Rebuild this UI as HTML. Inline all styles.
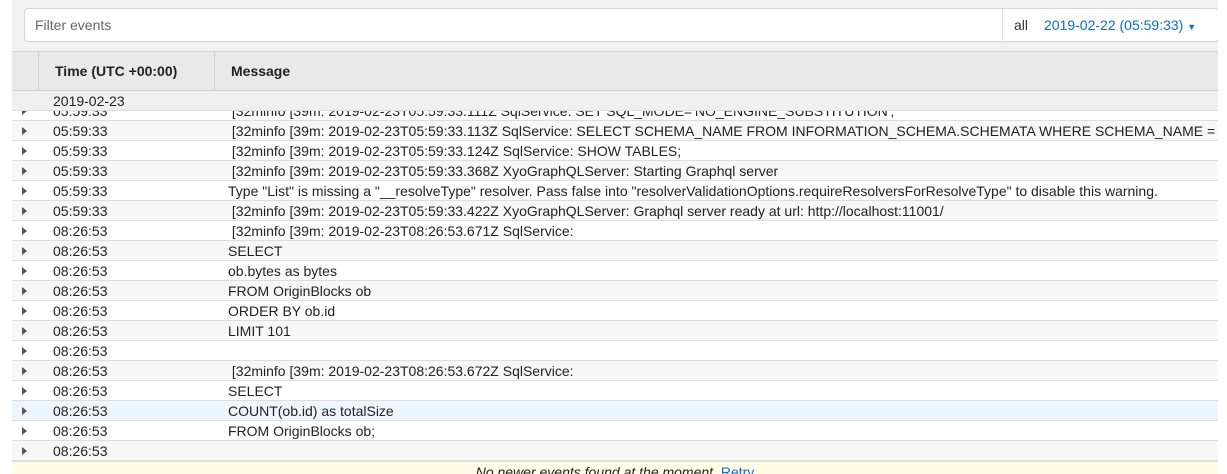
<!DOCTYPE html><html><head><style>
*{margin:0;padding:0;box-sizing:border-box}
body{width:1227px;height:474px;overflow:hidden;background:#fff;font-family:"Liberation Sans",Arial,sans-serif;font-size:14px;color:#222;position:relative}
.wrap{position:absolute;left:12px;top:0;width:1206px;height:474px;background:#f2f2f2;overflow:hidden}
.filter{position:absolute;left:12px;top:8px;width:1195px;height:34px;background:#fff;border:1px solid #d5d5d5;border-radius:4px}
.filter .ph{position:absolute;left:10px;top:8px;color:#666}
.filter .sep{position:absolute;left:977px;top:0;bottom:0;border-left:1px solid #ddd}
.filter .all{position:absolute;left:989px;top:8px;color:#333}
.filter .dt{position:absolute;left:1019px;top:8px;color:#0a6ec8}
.head{position:absolute;left:0;top:51px;width:1206px;height:40px;background:#e9e9e9;border-top:1px solid #d5d5d5;border-bottom:1px solid #d2d2d2;font-weight:bold;font-size:14px}
.head .c1{position:absolute;left:26px;top:0;height:39px;border-left:1px solid #d0d0d0;padding:11px 0 0 16px;width:176px}
.head .c2{position:absolute;left:202px;top:0;height:39px;border-left:1px solid #d0d0d0;padding:11px 0 0 16px}
.date{position:absolute;left:0;top:91px;width:1206px;height:20px;background:#f0f0f0;border-bottom:1px solid #ddd;padding:2px 0 0 41px}
.rows{position:absolute;left:0;top:101px;width:1206px;height:360px;overflow:hidden}
.r{position:relative;height:20px;border-bottom:1px solid #ddd;background:#fff;white-space:nowrap}
.r:nth-child(even){background:#f7f7f7}
.r.hl{background:#eef6fd}
.r .a{position:absolute;left:10px;top:6px;width:0;height:0;border-left:5px solid #555;border-top:4px solid transparent;border-bottom:4px solid transparent}
.r .t{position:absolute;left:41px;top:2px}
.r .m{position:absolute;left:216px;top:2px}
.foot{position:absolute;left:0;top:461px;width:1206px;height:20px;background:#fffce6;border-top:1px solid #e5e2c5;text-align:center;font-style:italic;padding-top:2px;font-size:14px}
.foot a{color:#0a6ec8;font-style:normal}
</style></head><body>
<div class="wrap">
<div class="filter"><span class="ph">Filter events</span><div class="sep"></div><span class="all">all</span><span class="dt">2019-02-22 (05:59:33) <span style="font-size:9px">▼</span></span></div>
<div class="head"><div class="c1">Time (UTC +00:00)</div><div class="c2">Message</div></div>
<div class="rows">
<div class="r"><i class="a"></i><span class="t">05:59:33</span><span class="m">&nbsp;[32minfo [39m: 2019-02-23T05:59:33.111Z SqlService: SET SQL_MODE='NO_ENGINE_SUBSTITUTION';</span></div>
<div class="r"><i class="a"></i><span class="t">05:59:33</span><span class="m">&nbsp;[32minfo [39m: 2019-02-23T05:59:33.113Z SqlService: SELECT SCHEMA_NAME FROM INFORMATION_SCHEMA.SCHEMATA WHERE SCHEMA_NAME = 'xyo'</span></div>
<div class="r"><i class="a"></i><span class="t">05:59:33</span><span class="m">&nbsp;[32minfo [39m: 2019-02-23T05:59:33.124Z SqlService: SHOW TABLES;</span></div>
<div class="r"><i class="a"></i><span class="t">05:59:33</span><span class="m">&nbsp;[32minfo [39m: 2019-02-23T05:59:33.368Z XyoGraphQLServer: Starting Graphql server</span></div>
<div class="r"><i class="a"></i><span class="t">05:59:33</span><span class="m">Type "List" is missing a "__resolveType" resolver. Pass false into "resolverValidationOptions.requireResolversForResolveType" to disable this warning.</span></div>
<div class="r"><i class="a"></i><span class="t">05:59:33</span><span class="m">&nbsp;[32minfo [39m: 2019-02-23T05:59:33.422Z XyoGraphQLServer: Graphql server ready at url: http://localhost:11001/</span></div>
<div class="r"><i class="a"></i><span class="t">08:26:53</span><span class="m">&nbsp;[32minfo [39m: 2019-02-23T08:26:53.671Z SqlService:</span></div>
<div class="r"><i class="a"></i><span class="t">08:26:53</span><span class="m">SELECT</span></div>
<div class="r"><i class="a"></i><span class="t">08:26:53</span><span class="m">ob.bytes as bytes</span></div>
<div class="r"><i class="a"></i><span class="t">08:26:53</span><span class="m">FROM OriginBlocks ob</span></div>
<div class="r"><i class="a"></i><span class="t">08:26:53</span><span class="m">ORDER BY ob.id</span></div>
<div class="r"><i class="a"></i><span class="t">08:26:53</span><span class="m">LIMIT 101</span></div>
<div class="r"><i class="a"></i><span class="t">08:26:53</span><span class="m"></span></div>
<div class="r"><i class="a"></i><span class="t">08:26:53</span><span class="m">&nbsp;[32minfo [39m: 2019-02-23T08:26:53.672Z SqlService:</span></div>
<div class="r"><i class="a"></i><span class="t">08:26:53</span><span class="m">SELECT</span></div>
<div class="r hl"><i class="a"></i><span class="t">08:26:53</span><span class="m">COUNT(ob.id) as totalSize</span></div>
<div class="r"><i class="a"></i><span class="t">08:26:53</span><span class="m">FROM OriginBlocks ob;</span></div>
<div class="r"><i class="a"></i><span class="t">08:26:53</span><span class="m"></span></div>
</div>
<div class="date" style="z-index:2">2019-02-23</div>
<div class="foot">No newer events found at the moment. <a>Retry</a></div>
</div>
</body></html>
